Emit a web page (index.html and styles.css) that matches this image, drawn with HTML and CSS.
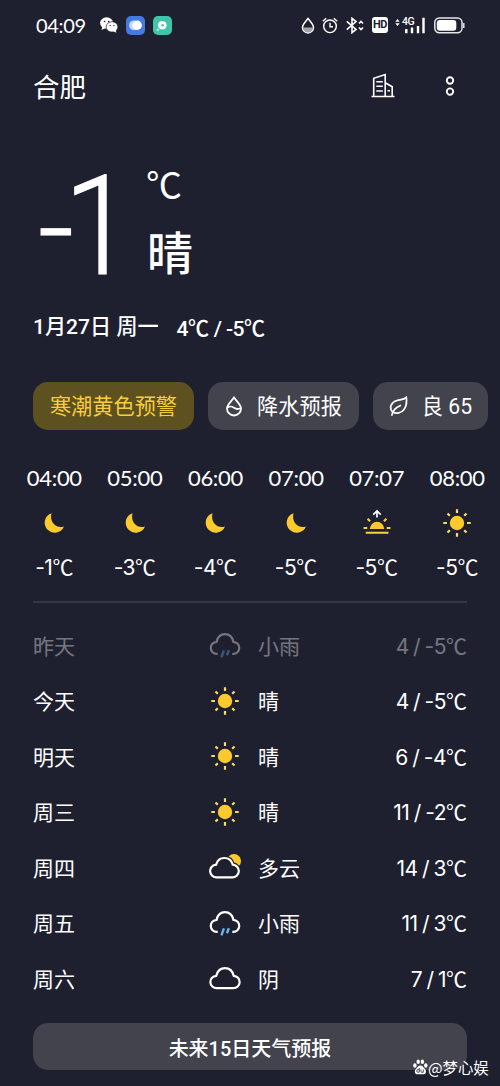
FILE: index.html
```html
<!DOCTYPE html>
<html lang="zh-CN">
<head>
<meta charset="utf-8">
<title>合肥天气</title>
<link rel="stylesheet" href="styles.css">
</head>
<body>
<svg class="defs" width="0" height="0">
  <symbol id="moon" viewBox="0 0 28 28"><path d="M11.600 4.200A10 10 0 1 0 24 17.400C16 20 9 12.500 11.600 4.200Z" fill="#fdca2e"/></symbol>
  <symbol id="sun" viewBox="0 0 28 28"><circle cx="14" cy="14" r="7.2" fill="#fdca2e"/><path d="M14 .3v3.6M14 24.1v3.6M.3 14h3.6M24.1 14h3.6M4.5 4.5l2.300 2.300M21.200 21.200l2.300 2.300M4.500 23.500l2.300-2.300M21.200 6.800l2.300-2.300" stroke="#fbdc6a" stroke-width="2.200"/></symbol>
  <symbol id="sunrise" viewBox="0 0 30 28"><path d="M7.300 20.400a7.700 7.700 0 0 1 15.400 0Z" fill="#fdca2e"/><path d="M.6 19.400h4M25.400 19.400h4M4.900 9.400l2.700 2.800M25.100 9.400l-2.700 2.800M2.900 24.400h24.400" stroke="#fbcf45" stroke-width="2.200"/><path d="M15 8.200V1.500M11 5l4-4 4 4" fill="none" stroke="#fff" stroke-width="1.800"/></symbol>
  <symbol id="cloud" viewBox="0 0 32 28"><path d="M7.800 24.200a6.200 6.200 0 0 1-.5-12.400C8.500 7.100 12 4.200 16 4.200s7.500 2.900 8.700 7.600a6.200 6.200 0 0 1-.5 12.400Z" fill="none" stroke="#fff" stroke-width="2.200"/></symbol>
  <symbol id="rain" viewBox="0 0 32 28"><path d="M8.700 22.800H7.800a5.900 5.900 0 0 1-.3-11.800C8.600 6 12 3.200 16 3.200s7.400 2.800 8.500 7.800a5.900 5.900 0 0 1-.3 11.800h-.9" fill="none" stroke="#fff" stroke-width="2.200"/><path d="M14.900 19.300l-2.500 7M19.900 19.300l-2 5" stroke="#67b5ef" stroke-width="2.400"/></symbol>
  <symbol id="cloudy" viewBox="0 0 32 28"><circle cx="25" cy="8" r="7" fill="#fdca2e"/><path d="M7.800 24.400a6.400 6.400 0 0 1-.6-12.800C8.300 7.300 11.500 5 15.300 5s7.300 2.300 8.400 6.600a6.400 6.400 0 0 1-.6 12.800Z" fill="#1e202f" stroke="#1e202f" stroke-width="4.600"/><path d="M7.800 24.400a6.400 6.400 0 0 1-.6-12.800C8.300 7.300 11.500 5 15.300 5s7.300 2.300 8.400 6.600a6.400 6.400 0 0 1-.6 12.800Z" fill="none" stroke="#fff" stroke-width="2.200"/></symbol>
</svg>

<header class="status">
  <span class="clock">04:09</span>
  <svg class="wechat" width="18" height="16" viewBox="0 0 18 16"><ellipse cx="6.600" cy="6" rx="6.500" ry="5.700" fill="#fff"/><path d="M2.300 9l-.7 4 4-2Z" fill="#fff"/><ellipse cx="12" cy="9.900" rx="5.900" ry="5.200" fill="#fff" stroke="#1c1e2d" stroke-width=".7"/><path d="M13 14l3.300 1.800-.5-3Z" fill="#fff"/><g fill="#1c1e2d"><circle cx="4.500" cy="4.500" r=".8"/><circle cx="8.700" cy="4.500" r=".8"/><circle cx="10.100" cy="8.600" r=".7"/><circle cx="13.900" cy="8.600" r=".7"/></g></svg>
  <svg class="app-blue" width="19" height="19" viewBox="0 0 19 19"><rect width="19" height="19" rx="5" fill="#447ae1"/><circle cx="8" cy="9.300" r="4.900" fill="#c5d8ff"/><circle cx="11.200" cy="9.300" r="4.700" fill="#fff"/></svg>
  <svg class="app-green" width="19" height="19" viewBox="0 0 19 19"><rect width="19" height="19" rx="5" fill="#40c5aa"/><circle cx="9.300" cy="9.200" r="4.300" fill="#fff"/><circle cx="9.600" cy="9.200" r="1.200" fill="#40c5aa"/><circle cx="4.700" cy="13.700" r="1" fill="#fff"/></svg>
  <span class="grow"></span>
  <svg class="s-drop" width="14" height="17" viewBox="0 0 14 17"><path d="M7 1.500C5.200 4 1.500 7.500 1.500 10.400a5.500 5.500 0 0 0 11 0C12.500 7.500 8.800 4 7 1.500Z" fill="none" stroke="#fff" stroke-width="1.500"/><path d="M2 10.500h10a5 5 0 0 1-10 0Z" fill="#a4a5ac"/></svg>
  <svg class="s-alarm" width="16" height="17" viewBox="0 0 16 17"><g fill="none" stroke="#fff" stroke-width="1.400"><circle cx="8" cy="9.300" r="6.300"/><path d="M.8 4.200L4.200 1.200M15.200 4.200l-3.400-3M8 5.700v4h3"/></g></svg>
  <svg class="s-bt" width="18" height="17" viewBox="0 0 18 17"><g fill="none" stroke="#fff" stroke-width="1.600"><path d="M.8 4.300L10 12.400 6 15.700V1.300l4 3.300L.8 12.700"/><path d="M13 6.500l2-2 2 2M13 10.500l2 2 2-2"/></g></svg>
  <span class="hd">HD</span>
  <svg class="s-arrows" width="5" height="17" viewBox="0 0 5 17"><path d="M.3 4.800l2.200-2.800 2.200 2.800ZM.3 6.300l2.200 2.800 2.200-2.800Z" fill="#fff"/></svg>
  <span class="signal"><b>4G</b><svg width="21" height="17" viewBox="0 0 21 17"><path d="M2.300 12v4.300M8 10.600v5.700M14 9v7.300M19.500 .8v15.500" stroke="#fff" stroke-width="2.400"/></svg></span>
  <svg class="s-bat" width="31" height="17" viewBox="0 0 31 17"><rect x=".8" y=".9" width="27.200" height="14.900" rx="4.500" fill="none" stroke="#e6e7ea" stroke-width="1.500"/><rect x="2.800" y="2.900" width="19.500" height="10.900" rx="3" fill="#fff"/><path d="M29.700 6v5" stroke="#d7d8dc" stroke-width="1.700"/></svg>
</header>

<nav class="top">
  <h1>合肥</h1>
  <svg class="city" width="24" height="25" viewBox="0 0 24 25"><g fill="none" stroke="#fff" stroke-width="1.600"><path d="M.5 23.500h23M2.700 23.500V5.300L14.200 1.500v22M14.200 9.800l7 4v9.700M5.300 8.700h6.500M5.300 13.200h6.500M5.300 18h6.500M16.500 17.800h2.500"/></g></svg>
  <svg class="more" width="10" height="20" viewBox="0 0 10 20"><g fill="none" stroke="#fff" stroke-width="1.900"><circle cx="5" cy="4.500" r="3.200"/><circle cx="5" cy="15.600" r="3.200"/></g></svg>
</nav>

<section class="now">
  <div class="degree"><span class="minus">-</span><span class="digit">1</span></div>
  <div class="cond"><span class="unit">℃</span><span class="sky">晴</span></div>
</section>
<p class="date"><span>1月27日 周一</span><span class="range">4<i>℃</i> / -5<i>℃</i></span></p>

<div class="chips">
  <span class="chip warn">寒潮黄色预警</span>
  <span class="chip rainfall"><svg width="18" height="21" viewBox="0 0 18 21"><g fill="none" stroke="#fff" stroke-width="1.800"><path d="M9 1.500C6.500 5 2 8.700 2 12.500a7 7 0 0 0 14 0C16 8.700 11.500 5 9 1.500Z"/><path d="M2.500 11.500c3-2 4.500-1 6.500.3s4 2 7 .2"/></g></svg>降水预报</span>
  <span class="chip air"><svg width="19" height="21" viewBox="0 0 19 21"><path d="M2.800 19.800c.2-4.300 3.200-8 9.200-10.600M3.500 16C-.5 11.500 2.500 6 8 4.500c4-1 7-1 9.300-3 .6 4.500.2 9-2.500 12.200-2.600 3.200-7.300 4.600-11.300 2.300Z" fill="none" stroke="#fff" stroke-width="1.700"/></svg>良 65</span>
</div>

<section class="hours">
  <div class="hour"><time>04:00</time><svg><use href="#moon"/></svg><span>-1<i>℃</i></span></div>
  <div class="hour"><time>05:00</time><svg><use href="#moon"/></svg><span>-3<i>℃</i></span></div>
  <div class="hour"><time>06:00</time><svg><use href="#moon"/></svg><span>-4<i>℃</i></span></div>
  <div class="hour"><time>07:00</time><svg><use href="#moon"/></svg><span>-5<i>℃</i></span></div>
  <div class="hour"><time>07:07</time><svg><use href="#sunrise"/></svg><span>-5<i>℃</i></span></div>
  <div class="hour"><time>08:00</time><svg><use href="#sun"/></svg><span>-5<i>℃</i></span></div>
</section>

<section class="days">
  <div class="day past"><span>昨天</span><svg><use href="#rain"/></svg><span>小雨</span><span class="temp">4 / -5<i>℃</i></span></div>
  <div class="day"><span>今天</span><svg><use href="#sun"/></svg><span>晴</span><span class="temp">4 / -5<i>℃</i></span></div>
  <div class="day"><span>明天</span><svg><use href="#sun"/></svg><span>晴</span><span class="temp">6 / -4<i>℃</i></span></div>
  <div class="day"><span>周三</span><svg><use href="#sun"/></svg><span>晴</span><span class="temp">11 / -2<i>℃</i></span></div>
  <div class="day"><span>周四</span><svg><use href="#cloudy"/></svg><span>多云</span><span class="temp">14 / 3<i>℃</i></span></div>
  <div class="day"><span>周五</span><svg><use href="#rain"/></svg><span>小雨</span><span class="temp">11 / 3<i>℃</i></span></div>
  <div class="day"><span>周六</span><svg><use href="#cloud"/></svg><span>阴</span><span class="temp">7 / 1<i>℃</i></span></div>
</section>

<button class="forecast">未来15日天气预报</button>
<div class="credit"><svg width="15" height="16" viewBox="0 0 15 16"><g fill="#fff"><ellipse cx="1.900" cy="6.500" rx="1.700" ry="2.200"/><ellipse cx="5.200" cy="2.800" rx="1.700" ry="2.300"/><ellipse cx="9.400" cy="2.800" rx="1.700" ry="2.300"/><ellipse cx="12.800" cy="6.500" rx="1.700" ry="2.200"/><path d="M7.400 6.500c2 0 2.800 1.800 4.200 3.200 2.400 2.200 1.500 5.600-1.300 5.600H4.500c-2.800 0-3.700-3.400-1.300-5.600C4.600 8.300 5.400 6.500 7.400 6.500Z"/></g><path d="M6.300 9v4.200H5a1.300 1.300 0 0 1 0-2.600h1.300M8 10.500v2.200q0 .6.700.6h1.600v-2.800" fill="none" stroke="#3e3f49" stroke-width=".9"/></svg>@梦心娱</div>
</body>
</html>
```
FILE: styles.css
```css
* { box-sizing: border-box; }
body {
  margin: 0;
  width: 500px;
  height: 1086px;
  overflow: hidden;
  position: relative;
  display: flex;
  flex-direction: column;
  background: #1e202f;
  color: #fff;
  font-family: Inter, "Noto Sans CJK SC", sans-serif;
}
svg { display: block; flex: none; }
i { font-style: normal; font-family: "Noto Sans CJK SC", sans-serif; letter-spacing: 0; }
.defs { position: absolute; }

.status { height: 50px; padding: 0 36px; display: flex; align-items: center; }
.clock { width: 64px; font: 20px/50px Lato, sans-serif; letter-spacing: -.3px; }
.app-blue { margin-left: 8px; }
.app-green { margin-left: 8px; }
.grow { flex: 1; }
.s-drop { margin-right: 1px; margin-left: -2px; }
.s-alarm { margin-left: 6px; }
.s-bt { margin-left: 8px; }
.hd { margin-left: 8px; width: 16px; height: 16px; border-radius: 3px; background: #fff; color: #1c1e2d; font: bold 11px/16px Roboto, sans-serif; letter-spacing: -.5px; text-align: center; }
.s-arrows { margin-left: 7px; }
.signal { position: relative; margin-left: 4px; }
.signal b { position: absolute; left: -2px; top: -1px; font: 500 10.500px/12px Roboto, sans-serif; letter-spacing: -.4px; }
.s-bat { margin-left: 9px; margin-right: -1px; }

.top { height: 72px; padding: 0 45px 0 33px; display: flex; align-items: center; }
.top h1 { margin: 0 auto 0 0; font: 400 26.500px/72px "Noto Sans CJK SC", sans-serif; }
.city { margin-bottom: 1px; }
.more { margin-left: 50px; margin-bottom: 1px; }

.now { height: 180px; padding: 0 0 0 36px; display: flex; }
.degree { width: 111px; font: 300 139px/139px Roboto, sans-serif; display: flex; }
.minus { width: 37px; margin: 37px 0 0 2px; font-size: 126px; -webkit-text-stroke: 1px #fff; }
.digit { margin: 35px 0 0 -16px; transform: scaleX(.9); transform-origin: 47px 50%; -webkit-text-stroke: 1px #fff; }
.cond { display: flex; flex-direction: column; }
.unit { margin-left: -1px; padding-top: 40px; font: 400 36px/42px "Noto Sans CJK SC", sans-serif; }
.sky { margin-top: 17px; font: 500 46px/58px "Noto Sans CJK SC", sans-serif; }
.date { height: 50px; margin: 0; padding-left: 33px; display: flex; gap: 18px; font: 500 21.100px/50px Roboto, "Noto Sans CJK SC", sans-serif; }
.range { letter-spacing: -.6px; }

.chips { margin-top: 30px; height: 48px; padding-left: 33px; display: flex; gap: 14px; }
.chip { height: 47.500px; padding-top: 1px; display: flex; align-items: center; justify-content: center; border-radius: 15px; background: #42434d; font: 400 21.200px/47px Roboto, "Noto Sans CJK SC", sans-serif; white-space: nowrap; }
.warn { width: 161px; background: #5c511f; color: #f8cd3c; }
.rainfall { width: 151px; gap: 14px; }
.air { width: 115px; gap: 14px; }

.hours { margin-top: 29px; height: 142px; padding-left: 14px; display: grid; grid-template-columns: repeat(6, 80.600px); align-content: start; }
.hour { display: flex; flex-direction: column; align-items: center; font-size: 21px; letter-spacing: -.5px; line-height: 38px; }
.hour time { font: 22px/37px Lato, sans-serif; letter-spacing: -.3px; }
.hour svg { width: 28px; height: 28px; margin: 13px 0 10px; }
.hour span { white-space: nowrap; }

.days { margin: 0 33px; border-top: 2px solid #343643; padding-top: 16px; }
.day { height: 55.500px; display: grid; grid-template-columns: 176px 49px 1fr auto; align-items: center; font-size: 21px; line-height: 32px; }
.day svg { width: 32px; height: 28px; margin-bottom: 3px; }
.past { opacity: .38; }
.temp { font-size: 21px; letter-spacing: -.5px; word-spacing: -1px; white-space: nowrap; }
.day .temp { margin-top: -2px; }

.forecast { position: relative; margin: 15px 33px 0; height: 47.500px; border: 0; padding: 5px 0 0; border-radius: 15px; background: #42434d; color: #fff; font: 500 20px/30px Roboto, "Noto Sans CJK SC", sans-serif; }
.credit { position: absolute; left: 413px; top: 1056px; display: flex; align-items: center; font: 15.400px/22px "Noto Sans CJK SC", sans-serif; white-space: nowrap; }
```
